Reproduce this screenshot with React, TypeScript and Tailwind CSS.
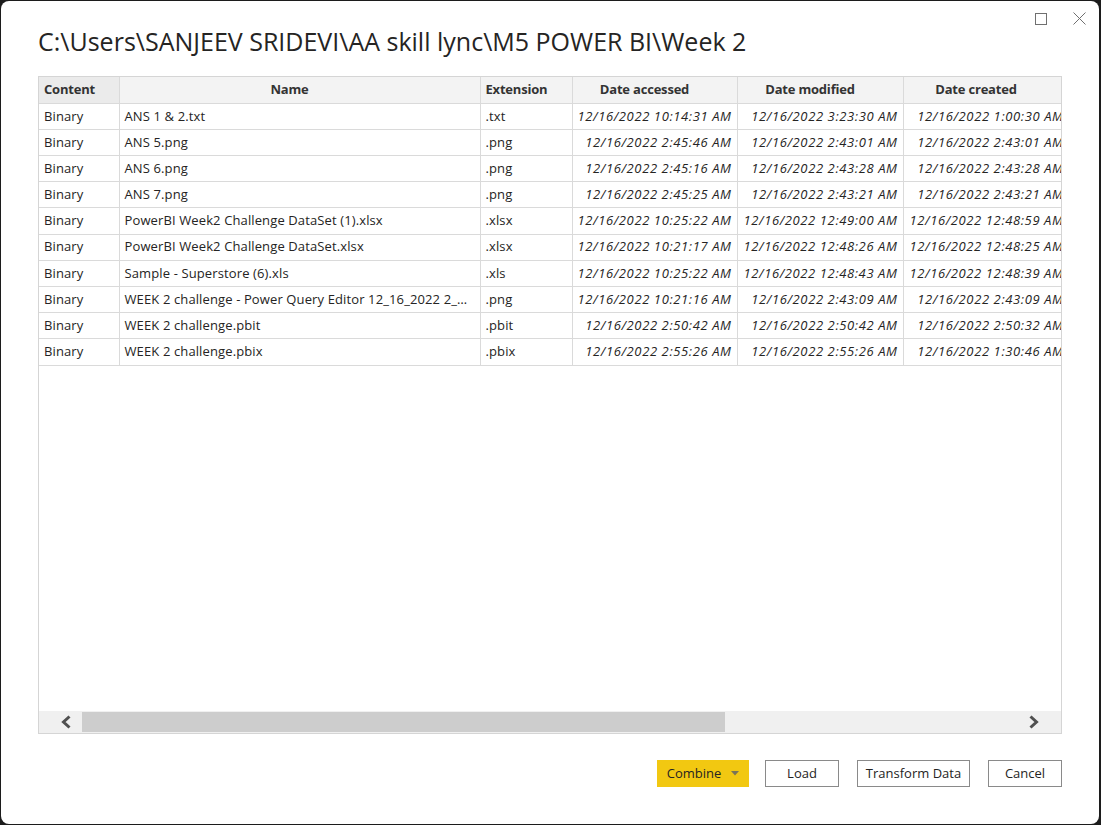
import React from "react";

type Row = { name: string; ext: string; acc: string; mod: string; cre: string };

const D = "12/16/2022 ";

const ROWS: Row[] = [
  { name: "ANS 1 & 2.txt", ext: ".txt", acc: "10:14:31 AM", mod: "3:23:30 AM", cre: "1:00:30 AM" },
  { name: "ANS 5.png", ext: ".png", acc: "2:45:46 AM", mod: "2:43:01 AM", cre: "2:43:01 AM" },
  { name: "ANS 6.png", ext: ".png", acc: "2:45:16 AM", mod: "2:43:28 AM", cre: "2:43:28 AM" },
  { name: "ANS 7.png", ext: ".png", acc: "2:45:25 AM", mod: "2:43:21 AM", cre: "2:43:21 AM" },
  { name: "PowerBI Week2 Challenge DataSet (1).xlsx", ext: ".xlsx", acc: "10:25:22 AM", mod: "12:49:00 AM", cre: "12:48:59 AM" },
  { name: "PowerBI Week2 Challenge DataSet.xlsx", ext: ".xlsx", acc: "10:21:17 AM", mod: "12:48:26 AM", cre: "12:48:25 AM" },
  { name: "Sample - Superstore (6).xls", ext: ".xls", acc: "10:25:22 AM", mod: "12:48:43 AM", cre: "12:48:39 AM" },
  { name: "WEEK 2 challenge - Power Query Editor 12_16_2022 2_43_09 AM.png", ext: ".png", acc: "10:21:16 AM", mod: "2:43:09 AM", cre: "2:43:09 AM" },
  { name: "WEEK 2 challenge.pbit", ext: ".pbit", acc: "2:50:42 AM", mod: "2:50:42 AM", cre: "2:50:32 AM" },
  { name: "WEEK 2 challenge.pbix", ext: ".pbix", acc: "2:55:26 AM", mod: "2:55:26 AM", cre: "1:30:46 AM" },
];

const cell = "h-[26.2px] border-r border-b border-[#dadada] px-[5px] whitespace-nowrap overflow-hidden";
const td = `${cell} tracking-[0.12px]`;
const dt = `${cell} text-right italic tracking-[0.6px]`;
const th = `${cell} bg-[#f3f3f3] text-center pr-[25px] tracking-[-0.2px]`;

function Chevron({ dir }: { dir: "left" | "right" }) {
  return (
    <svg width="12" height="14" viewBox="0 0 12 14">
      <polyline
        points={dir === "left" ? "9.5,1.5 3.5,7 9.5,12.5" : "2.5,1.5 8.5,7 2.5,12.5"}
        fill="none"
        stroke="#505050"
        strokeWidth="3"
      />
    </svg>
  );
}

export default function App() {
  return (
    <div className="w-[1101px] h-[825px] bg-[#1c1c1c] pt-px pl-px" style={{ fontFamily: '"Open Sans", "Noto Sans", sans-serif' }}>
      <div className="relative w-[1098px] h-[823px] bg-white rounded-[8px] px-[37px] text-[#252423]">
        <div className="absolute top-[11px] right-[13px] flex items-center gap-[26px]">
          <svg width="12" height="12" viewBox="0 0 12 12">
            <rect x="0.5" y="0.5" width="11" height="11" fill="none" stroke="#707070" />
          </svg>
          <svg width="13" height="13" viewBox="0 0 13 13">
            <path d="M0.5 0.5 L12.5 12.5 M12.5 0.5 L0.5 12.5" stroke="#707070" strokeWidth="1" />
          </svg>
        </div>

        <div className="h-[75px] pt-[6px] flex items-center">
          <h1 className="text-[25px] leading-none">C:\Users\SANJEEV SRIDEVI\AA skill lync\M5 POWER BI\Week 2</h1>
        </div>

        <div className="h-[658px] border border-[#d5d5d5] flex flex-col">
          <div className="flex-1 overflow-hidden">
            <table className="table-fixed border-collapse w-[1030px] text-[13px]">
              <colgroup>
                <col className="w-[80px]" />
                <col className="w-[361px]" />
                <col className="w-[92px]" />
                <col className="w-[165px]" />
                <col className="w-[166px]" />
                <col className="w-[166px]" />
              </colgroup>
              <thead>
                <tr className="font-semibold text-[#333]">
                  <th className={`${cell} bg-[#ebebeb] text-left tracking-[-0.2px]`}>Content</th>
                  <th className={th}>Name</th>
                  <th className={`${cell} bg-[#f3f3f3] text-left tracking-[-0.2px]`}>Extension</th>
                  <th className={th}>Date accessed</th>
                  <th className={th}>Date modified</th>
                  <th className={th}>Date created</th>
                </tr>
              </thead>
              <tbody>
                {ROWS.map((r) => (
                  <tr key={r.name}>
                    <td className={td}>Binary</td>
                    <td className={`${td} text-ellipsis`}>{r.name}</td>
                    <td className={td}>{r.ext}</td>
                    <td className={dt}>{D + r.acc}</td>
                    <td className={dt}>{D + r.mod}</td>
                    <td className={dt}>{D + r.cre}</td>
                  </tr>
                ))}
              </tbody>
            </table>
          </div>
          <div className="h-[22px] bg-[#f0f0f0] flex items-stretch">
            <div className="w-[43px] flex items-center justify-start pl-[21px]">
              <Chevron dir="left" />
            </div>
            <div className="flex-1 flex items-stretch py-px">
              <div className="w-[643px] bg-[#cdcdcd]" />
            </div>
            <div className="w-[43px] flex items-center justify-start pl-[10px]">
              <Chevron dir="right" />
            </div>
          </div>
        </div>

        <div className="mt-[26px] flex justify-end items-center gap-[18px] text-[13px]">
          <button className="w-[92px] h-[27px] bg-[#f2c811] flex items-center justify-center gap-[10px] mr-[-2px]">
            <span>Combine</span>
            <svg width="8" height="5" viewBox="0 0 8 5">
              <path d="M0 0 H8 L4 4.5 Z" fill="#7a7458" />
            </svg>
          </button>
          <button className="w-[74px] h-[27px] border border-[#8a8a8a] bg-white">Load</button>
          <button className="w-[113px] h-[27px] border border-[#8a8a8a] bg-white">Transform Data</button>
          <button className="w-[74px] h-[27px] border border-[#8a8a8a] bg-white">Cancel</button>
        </div>
      </div>
    </div>
  );
}
